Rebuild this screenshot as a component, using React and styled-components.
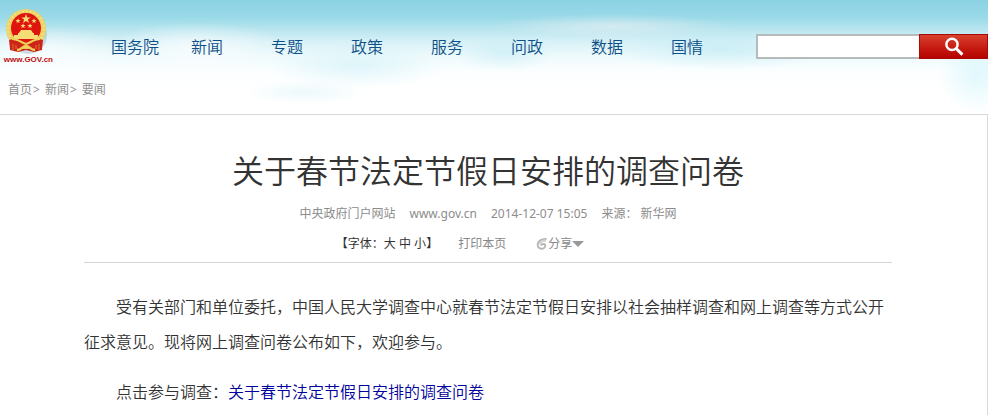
import React from 'react'
import styled, { createGlobalStyle } from 'styled-components'

const links = [
  '国务院',
  '新闻',
  '专题',
  '政策',
  '服务',
  '问政',
  '数据',
  '国情',
]

const crumbs = ['首页', '新闻', '要闻']

const App = () => {
  return (
    <>
      <GlobalStyle />
      <Page>
        <Header>
          <TopBar>
            <Logo href="#home">
              <Emblem />
              <span>www.GOV.cn</span>
            </Logo>
            <Nav>
              { links.map(( link ) => (
                <a key={ link } href="#nav">{ link }</a>
              ))}
            </Nav>
            <Search role="search" onSubmit={ ( e ) => e.preventDefault() }>
              <input type="text" aria-label="搜索" />
              <button type="submit" aria-label="搜索">
                <SearchIcon />
              </button>
            </Search>
          </TopBar>
          <Breadcrumb>
            { crumbs.map(( crumb, index ) => (
              <span key={ index }>
                <a href="#crumb">{ crumb }</a>
                { index < crumbs.length - 1 && <i>&gt;</i> }
              </span>
            ))}
          </Breadcrumb>
        </Header>
        <Article>
          <Title>关于春节法定节假日安排的调查问卷</Title>
          <Meta>
            <span>中央政府门户网站</span>
            <span>www.gov.cn</span>
            <time>2014-12-07 15:05</time>
            <span>来源： 新华网</span>
          </Meta>
          <Tools>
            <FontSize>
              【字体：<button type="button">大</button> <button type="button">中</button> <button type="button">小</button>】
            </FontSize>
            <ToolButton type="button">打印本页</ToolButton>
            <ToolButton type="button">
              <ShareIcon />
              分享
              <Caret />
            </ToolButton>
          </Tools>
          <Content>
            <p>
              受有关部门和单位委托，中国人民大学调查中心就春节法定节假日安排以社会抽样调查和网上调查等方式公开征求意见。现将网上调查问卷公布如下，欢迎参与。
            </p>
            <p>
              点击参与调查：<a href="#survey">关于春节法定节假日安排的调查问卷</a>
            </p>
          </Content>
        </Article>
      </Page>
    </>
  )
}

const star = 'M0 -1L.25 -.32L.95 -.31L.39 .12L.59 .81L0 .4L-.59 .81L-.39 .12L-.95 -.31L-.25 -.32Z'

const Emblem = () => (
  <svg width="44" height="46" viewBox="0 0 44 46" aria-hidden="true">
    <ellipse cx="24" cy="26" rx="19" ry="19" fill="#7fa6ae" opacity=".35" />
    <path d="M7 28L6 41L14 43L22 41L30 43L38 41L37 28Z" fill="#c9201a" />
    <circle cx="22" cy="20" r="20" fill="#ecd264" />
    <circle cx="22" cy="20" r="18" fill="none" stroke="#f3e182" strokeWidth="2" strokeDasharray="2 2" />
    <circle cx="22" cy="19" r="15" fill="#e0140f" />
    <g fill="#f6dc74">
      <path d={ star } transform="translate(22 10) scale(5)" />
      <path d={ star } transform="translate(14 12) scale(2.8)" />
      <path d={ star } transform="translate(30 12) scale(2.8)" />
      <path d={ star } transform="translate(19 17) scale(2.8)" />
      <path d={ star } transform="translate(26 17) scale(2.8)" />
      <path d="M17 21H27L29 24H15Z" />
      <path d="M14 24H30V26H34V30H10V26H14Z" />
    </g>
    <path d="M5 31C10 29 16 30 22 34C28 30 34 29 39 31L38 40C31 43 26 36 22 38C18 36 13 43 6 40Z" fill="#ce2418" />
    <path d="M8 30C14 30 18 34 22 35C26 34 30 30 36 30" fill="none" stroke="#f0cf57" strokeWidth="2" />
    <path d="M13 41C18 41 18 37 22 37C26 37 26 41 31 41" fill="none" stroke="#f0cf57" strokeWidth="2.4" />
    <path d="M9 35V41M12 36V40M32 36V40M35 35V41" stroke="#d9782f" strokeWidth="1" />
  </svg>
)

const SearchIcon = () => (
  <svg width="20" height="20" viewBox="0 0 20 20" fill="none" stroke="#fff" aria-hidden="true">
    <circle cx="8" cy="7.4" r="5.6" strokeWidth="2.4" />
    <path d="M12 11.4L18.4 17.6" strokeWidth="3" />
  </svg>
)

const ShareIcon = () => (
  <svg width="12" height="12" viewBox="0 0 12 12" fill="none" stroke="#b4b4b4" aria-hidden="true">
    <path d="M10.6 1C5 .6 1.4 3.6 1.6 7C1.8 10.4 5.6 11.6 8 10C10 8.6 9.6 6 7.6 6C6.4 6 5.4 6.6 5.2 7.6" strokeWidth="1.8" />
    <path d="M10 2.6C7 2.4 4.4 4 3.4 6.6" strokeWidth="2" stroke="#cfcfcf" />
  </svg>
)

const Caret = () => (
  <svg width="12" height="6" viewBox="0 0 12 6" fill="#999" aria-hidden="true">
    <path d="M0 0H12L6 6Z" />
  </svg>
)

const GlobalStyle = createGlobalStyle`
  * {
    box-sizing: border-box;
    margin: 0;
    padding: 0;
  }

  body {
    background-color: white;
    color: #333;
    font-family: 'Noto Sans', 'Noto Sans CJK SC', sans-serif;
    font-size: 12px;
  }

  a {
    color: inherit;
    text-decoration: none;
  }

  button {
    background: none;
    border: 0;
    color: inherit;
    cursor: pointer;
    font: inherit;
  }
`

const Page = styled.div`
  display: flex;
  flex-direction: column;
  min-height: 100vh;
`

const Header = styled.header`
  background:
    radial-gradient(90px 22px at 36% 66px, rgba(205, 240, 247, 0.6), transparent),
    radial-gradient(50px 20px at 51% 52px, rgba(195, 236, 244, 0.6), transparent),
    radial-gradient(40px 40px at 99% 74px, rgba(205, 244, 250, 0.6), transparent),
    radial-gradient(110px 20px at 73% 50px, rgba(190, 234, 244, 0.6), transparent),
    radial-gradient(60px 12px at 31% 92px, rgba(228, 246, 251, 0.7), transparent),
    radial-gradient(90px 26px at 20% 48px, rgba(255, 255, 255, 0.7), transparent),
    radial-gradient(120px 12px at 62% 26px, rgba(236, 240, 243, 0.6), transparent),
    radial-gradient(90px 26px at 4% 52px, rgba(255, 255, 255, 0.7), transparent),
    linear-gradient(#8ad2e4, #9bdae8 18px, #b5e4ee 28px, #d8f1f7 42px, #eefafc 56px, #fbfeff 70px, white 90px);
  border-bottom: 1px solid #d5d9da;
  height: 115px;
`

const TopBar = styled.div`
  align-items: flex-start;
  display: flex;
`

const Logo = styled.a`
  align-items: flex-end;
  color: #c00d12;
  display: flex;
  flex-direction: column;
  font-family: 'Liberation Sans', sans-serif;
  font-size: 8px;
  font-weight: 700;
  line-height: 10px;
  padding-top: 9px;
  width: 53px;

  svg {
    margin-right: 5px;
  }
`

const Nav = styled.nav`
  color: #0d4f86;
  display: flex;
  flex: 1;
  font-size: 16px;
  font-weight: 350;
  line-height: 24px;
  padding: 35px 0 0 58px;

  a {
    white-space: nowrap;
    width: 80px;
  }
`

const Search = styled.form`
  display: flex;
  margin-top: 34px;

  input {
    background-color: white;
    border: 2px solid #b5babb;
    border-right: 0;
    height: 25px;
    outline: 0;
    padding: 0 6px;
    width: 163px;
  }

  button {
    align-items: center;
    background: linear-gradient(#d9412d, #c4180f 60%, #b50400);
    border: 1px solid #a80a06;
    display: flex;
    height: 25px;
    justify-content: center;
    width: 69px;
  }
`

const Breadcrumb = styled.nav`
  color: #8f8f8f;
  display: flex;
  gap: 5px;
  line-height: 18px;
  padding: 16px 8px 0;

  i {
    font-style: normal;
    margin-left: 1px;
  }
`

const Article = styled.main`
  border-right: 1px solid #d5d9da;
  flex: 1;
  padding: 32px 95px 0 84px;
`

const Title = styled.h1`
  font-size: 32px;
  font-weight: 350;
  line-height: 48px;
  text-align: center;
`

const Meta = styled.div`
  color: #8c8c8c;
  display: flex;
  gap: 14px;
  justify-content: center;
  line-height: 18px;
  margin-top: 10px;
`

const Tools = styled.div`
  align-items: center;
  border-bottom: 1px solid #d5d5d5;
  color: #888;
  display: flex;
  line-height: 18px;
  justify-content: center;
  padding: 12px 56px 9px 0;
`

const FontSize = styled.div`
  color: #333;
  margin-right: 20px;
  word-spacing: normal;
`

const ToolButton = styled.button`
  align-items: center;
  display: flex;

  & + & {
    margin-left: 30px;
  }
`

const Content = styled.div`
  font-size: 16px;
  font-weight: 350;
  line-height: 35px;
  padding-top: 27px;

  p {
    margin-bottom: 15px;
    text-indent: 32px;
  }

  p:last-child {
    margin-bottom: 0;
  }

  a {
    color: #00009c;
  }
`

export default App
